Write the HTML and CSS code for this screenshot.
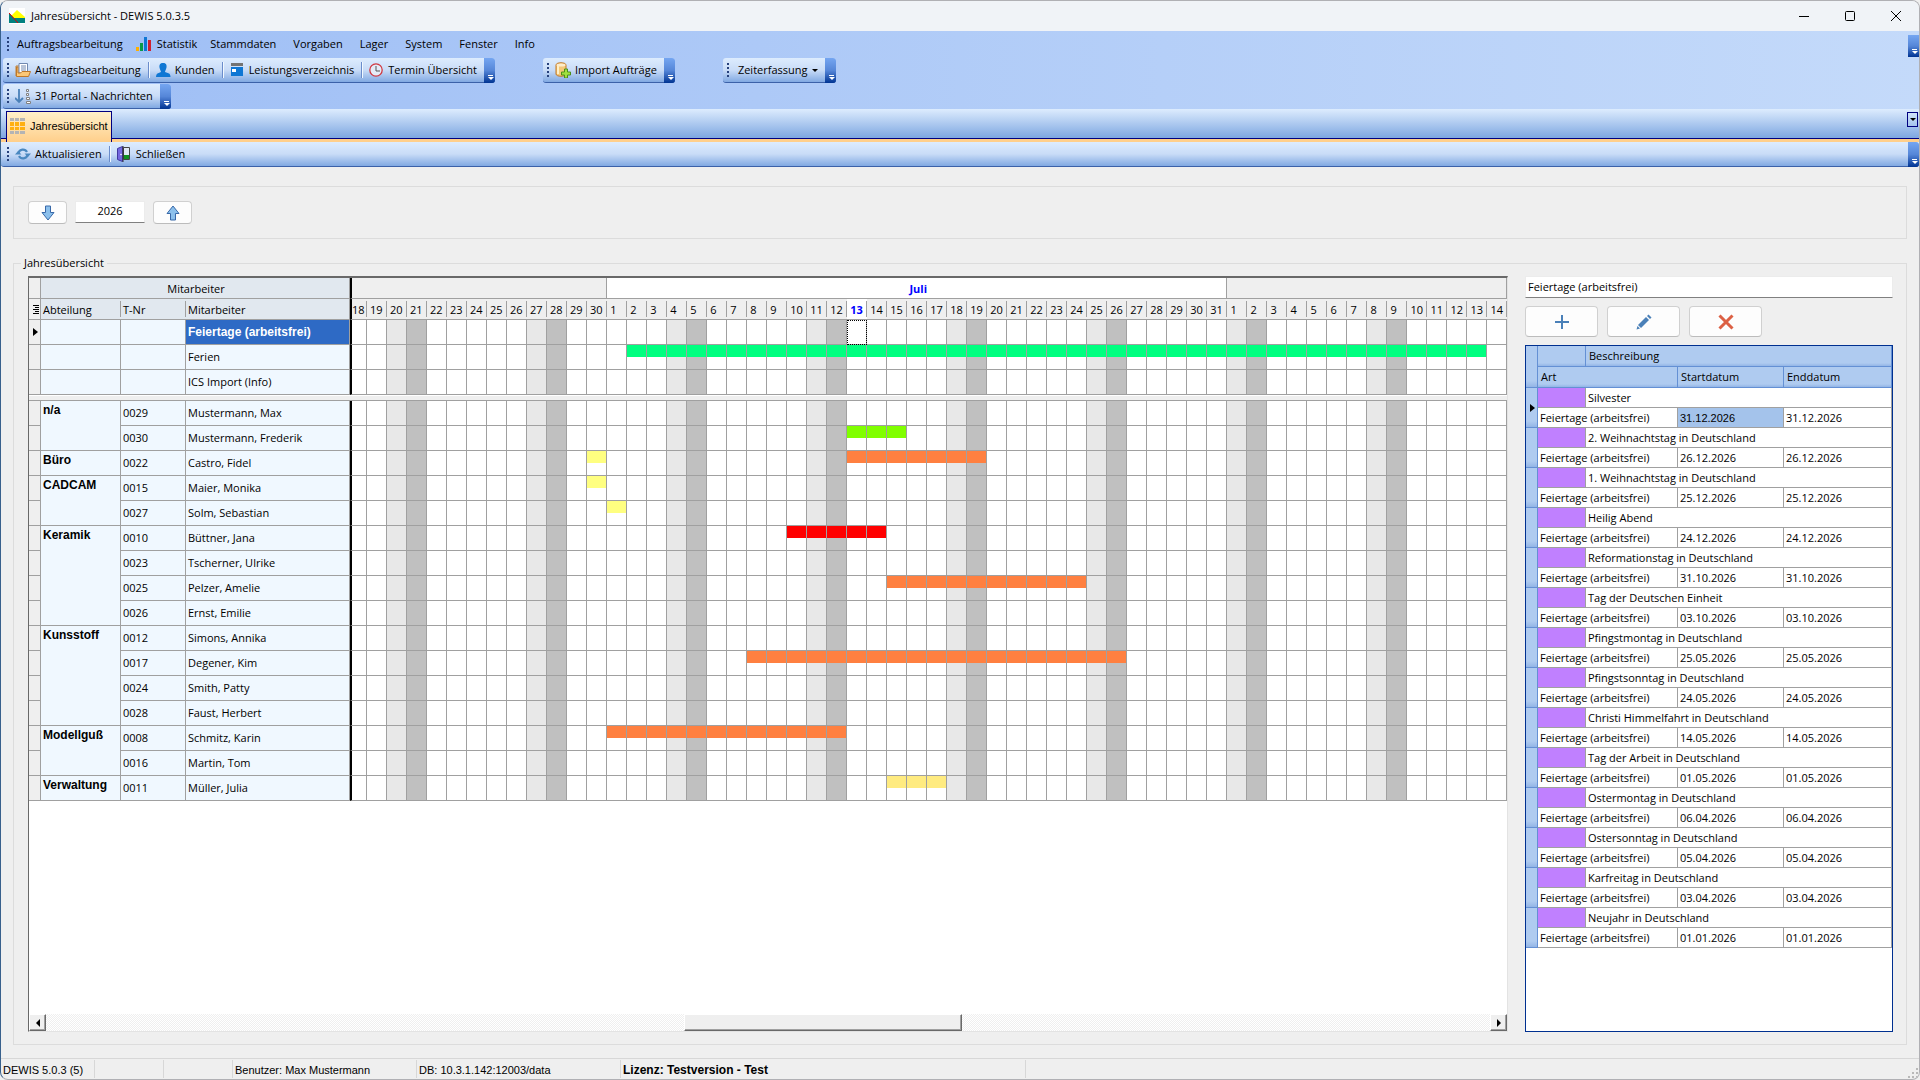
FILE: index.html
```html
<!DOCTYPE html>
<html lang="de">
<head>
  <meta charset="UTF-8">
  <title>Jahresübersicht - DEWIS 5.0.3.5</title>
  <link rel="stylesheet" href="styles.css">
</head>
<body>
  <div class="window">
    <header class="titlebar">
      <svg class="app-icon" width="16" height="16" viewBox="0 0 16 16">
        <rect width="16" height="16" fill="#fff"/>
        <path d="M0 10h16v5H0z" fill="#008080"/>
        <path d="M1 9l7-7 8 7v1H1z" fill="#ffff00"/>
        <path d="M0 5v5h5z" fill="#008080"/>
        <path d="M0 5l9 10" stroke="#e00000" stroke-width="1"/>
      </svg>
      <span class="title">Jahresübersicht - DEWIS 5.0.3.5</span>
      <button class="win-btn" aria-label="Minimieren"><svg width="10" height="10" viewBox="0 0 10 10"><path d="M0 5.5h10" stroke="#000"/></svg></button>
      <button class="win-btn" aria-label="Maximieren"><svg width="10" height="10" viewBox="0 0 10 10"><rect x=".5" y=".5" width="9" height="9" rx="1" fill="none" stroke="#000"/></svg></button>
      <button class="win-btn" aria-label="Fenster schließen"><svg width="10" height="10" viewBox="0 0 10 10"><path d="M0 0l10 10M10 0L0 10" stroke="#000"/></svg></button>
    </header>

    <div class="toolbars">
      <nav class="menu">
        <span class="grip"></span>
        <button>Auftragsbearbeitung</button>
        <button class="with-icon">
          <svg width="16" height="16" viewBox="0 0 16 16"><path d="M0 11h3v4H0z" fill="#ffb000"/><path d="M4 7h3v8H4z" fill="#0a9a48"/><path d="M8 1h3v14H8z" fill="#0f77d4"/><path d="M12 4h3v11h-3z" fill="#d02030"/></svg>
          Statistik
        </button>
        <button>Stammdaten</button>
        <button>Vorgaben</button>
        <button>Lager</button>
        <button>System</button>
        <button>Fenster</button>
        <button>Info</button>
        <button class="more" aria-label="Optionen"></button>
      </nav>

      <div class="tool-row">
        <div class="pill">
          <span class="grip"></span>
          <button class="tool">
            <svg width="16" height="16" viewBox="0 0 16 16"><path d="M1 14V4h3" fill="none" stroke="#c08030"/><path d="M4 1.500h8.500V11H4z" fill="#fff" stroke="#7088b0"/><path d="M6 4h5M6 6h5M6 8h5" stroke="#7088b0"/><path d="M1.500 5v9.500h12L15.500 9.500H7L5.500 11H3V5z" fill="#fbc878" stroke="#c07828"/></svg>
            Auftragsbearbeitung
          </button>
          <span class="sep"></span>
          <button class="tool">
            <svg width="16" height="16" viewBox="0 0 16 16"><path d="M8 1c3 0 4 2 3.500 4.500S10 9 10 10l4 1.500c1 .5 1.500 2 1.500 3.500H1c0-1.500.5-3 1.500-3.500L6 10c0-1-1.100-2-1.500-4.500S5 1 8 1z" fill="#0f77d4"/></svg>
            Kunden
          </button>
          <span class="sep"></span>
          <button class="tool">
            <svg width="16" height="16" viewBox="0 0 16 16"><path d="M2 1h12v3H2z" fill="#737373"/><path d="M2 5h12v9H2z" fill="#0f77d4"/><path d="M3 7h4v3H3z" fill="#fff"/></svg>
            Leistungsverzeichnis
          </button>
          <span class="sep"></span>
          <button class="tool">
            <svg width="16" height="16" viewBox="0 0 16 16"><circle cx="8" cy="8" r="6.200" fill="#e4ecf8" stroke="#d03840" stroke-width="1.300"/><path d="M8 4v5h4" fill="none" stroke="#555"/></svg>
            Termin Übersicht
          </button>
          <button class="more" aria-label="Optionen"></button>
        </div>

        <div class="pill">
          <span class="grip"></span>
          <button class="tool">
            <svg width="16" height="16" viewBox="0 0 16 16"><path d="M1 3c0-3 10-3 10 0v9c0 3-10 3-10 0z" fill="#f4c878" stroke="#c07828"/><path d="M3 4v8" stroke="#fff0c8" stroke-width="2"/><ellipse cx="6" cy="3" rx="4.500" ry="1.500" fill="#fdeccb"/><path d="M9.500 7h3v3h3v3h-3v3h-3v-3h-3v-3h3z" fill="#a0e040" stroke="#4c9018"/></svg>
            Import Aufträge
          </button>
          <button class="more" aria-label="Optionen"></button>
        </div>

        <div class="pill">
          <span class="grip"></span>
          <button class="tool text-only">Zeiterfassung <span class="caret"></span></button>
          <button class="more" aria-label="Optionen"></button>
        </div>
      </div>

      <div class="tool-row">
        <div class="pill">
          <span class="grip"></span>
          <button class="tool">
            <svg width="16" height="16" viewBox="0 0 16 16"><path d="M4 1v12M0 10l4 4 4-4" fill="none" stroke="#4a80b8" stroke-width="1.800"/><path d="M11.500 1.500h2v2h-2zM11.500 5.500h2v2h-2zM11.500 9.500h3v2h-3zM11.500 13.500h4v2h-4z" fill="#fff" stroke="#808080"/></svg>
            31 Portal - Nachrichten
          </button>
          <button class="more" aria-label="Optionen"></button>
        </div>
      </div>
    </div>

    <div class="tabs">
      <button class="tab">
        <svg width="15" height="16" viewBox="0 0 15 16"><path d="M0 0h4v3H0zM5 0h4v3H5zM10 0h5v3h-5zM0 13h4v3H0zM5 13h4v3H5zM10 13h5v3h-5z" fill="#b4b4b4"/><path d="M0 4h4v4H0zM5 4h4v4H5zM10 4h5v4h-5zM0 9h4v3H0zM5 9h4v3H5zM10 9h5v3h-5z" fill="#ffb010"/></svg>
        Jahresübersicht
      </button>
      <button class="tab-list" aria-label="Fensterliste"><span class="caret"></span></button>
    </div>

    <div class="pill page-tools">
      <span class="grip"></span>
      <button class="tool">
        <svg width="16" height="16" viewBox="0 0 16 16"><path d="M3.500 7A4.600 4.600 0 0 1 12 6M12.500 9A4.600 4.600 0 0 1 4 10" fill="none" stroke="#4a88c0" stroke-width="2.200"/><path d="M9.500 7.500h6.500L13 11zM0 8.500h6.500L3 5z" fill="#4a88c0"/></svg>
        Aktualisieren
      </button>
      <span class="sep"></span>
      <button class="tool">
        <svg width="16" height="16" viewBox="0 0 16 16"><path d="M7.500 1.500h6v12h-6z" fill="#dfe8f4" stroke="#444"/><path d="M8 9h5v4H8z" fill="#109020"/><path d="M1.500 2.500l5-2v15l-5-2z" fill="#7468e0" stroke="#4038a0"/><path d="M7 0v16" stroke="#333"/><circle cx="5" cy="8.500" r=".8" fill="#fff"/></svg>
        Schließen
      </button>
      <button class="more" aria-label="Optionen"></button>
    </div>

    <main>
      <div class="box year-box">
        <button class="btn btn-small" aria-label="Vorheriges Jahr"><svg width="14" height="16" viewBox="0 0 14 16"><path d="M4.500 1h5v6.500h3.500L7 15 1 7.500h3.500z" fill="#8cc0ec" stroke="#3868a8"/></svg></button>
        <input class="field year" type="text" value="2026" aria-label="Jahr">
        <button class="btn btn-small" aria-label="Nächstes Jahr"><svg width="14" height="16" viewBox="0 0 14 16"><path d="M4.500 15h5V8.500H13L7 1 1 8.500h3.500z" fill="#8cc0ec" stroke="#3868a8"/></svg></button>
      </div>

      <section class="box overview">
        <h2>Jahresübersicht</h2>
        <div class="panels">
          <div class="calendar">
            <div class="calendar-view">
              <table class="plan" id="plan"></table>
            </div>
            <div class="scrollbar">
              <button class="scroll-btn" aria-label="Nach links"><svg width="4" height="8" viewBox="0 0 4 8"><path d="M4 0v8L0 4z"/></svg></button>
              <div class="track"><div class="thumb"></div></div>
              <button class="scroll-btn" aria-label="Nach rechts"><svg width="4" height="8" viewBox="0 0 4 8"><path d="M0 0v8l4-4z"/></svg></button>
            </div>
          </div>

          <aside class="side">
            <input class="field" type="text" value="Feiertage (arbeitsfrei)" aria-label="Mitarbeiter">
            <div class="actions">
              <button class="btn" aria-label="Neu"><svg width="16" height="16" viewBox="0 0 16 16"><path d="M8 1v14M1 8h14" stroke="#4a80b8" stroke-width="2"/></svg></button>
              <button class="btn" aria-label="Bearbeiten"><svg width="16" height="16" viewBox="0 0 16 16"><path d="M2 11l8-8 3 3-8 8z" fill="#4a80b8"/><path d="M11 2l1.500-1.500 3 3L14 5z" fill="#4a80b8"/><path d="M1.500 12L4 14.500.500 15.500z" fill="#4a80b8"/></svg></button>
              <button class="btn" aria-label="Löschen"><svg width="16" height="16" viewBox="0 0 16 16"><path d="M1.500 1.500l13 13M14.500 1.500l-13 13" stroke="#dc6044" stroke-width="3"/></svg></button>
            </div>
            <div class="holidays">
              <table id="holidays">
                <colgroup><col class="c-ind"><col class="c-swatch"><col class="c-art"><col class="c-date"><col></colgroup>
                <thead>
                  <tr><th class="ind" rowspan="2"></th><th></th><th colspan="3">Beschreibung</th></tr>
                  <tr><th colspan="2">Art</th><th>Startdatum</th><th>Enddatum</th></tr>
                </thead>
              </table>
            </div>
          </aside>
        </div>
      </section>
    </main>

    <footer class="status">
      <span class="s-version">DEWIS 5.0.3 (5)</span>
      <span class="s-empty"></span>
      <span class="s-empty"></span>
      <span class="s-user">Benutzer: Max Mustermann</span>
      <span class="s-db">DB: 10.3.1.142:12003/data</span>
      <span class="s-license">Lizenz: Testversion - Test</span>
      <svg class="size-grip" width="11" height="11" viewBox="0 0 11 11"><path d="M8 0h2v2H8zM8 4h2v2H8zM4 4h2v2H4zM8 8h2v2H8zM4 8h2v2H4zM0 8h2v2H0z" fill="#b8b8b8"/></svg>
    </footer>
  </div>

  <script src="script.js"></script>
</body>
</html>
```

FILE: styles.css
```css
* {
  box-sizing: border-box;
}

body {
  margin: 0;
  background: #efefef;
  color: #000;
  font: 11px/16px "Open Sans", "Noto Sans", sans-serif;
}

button,
input {
  font: inherit;
  color: inherit;
}

button {
  background: none;
  border: 0;
  padding: 0;
  white-space: nowrap;
}

svg {
  display: block;
  flex: none;
}

.window {
  display: flex;
  flex-direction: column;
  min-height: 100vh;
  border: 1px solid #b0b0b4;
  border-left-color: #38608c;
  border-radius: 8px;
  overflow: hidden;
}

/* Title bar */
.titlebar {
  display: flex;
  align-items: center;
  height: 30px;
  padding-left: 8px;
  background: #f0f3f7;
}

.title {
  flex: 1;
  margin-left: 6px;
}

.win-btn {
  display: flex;
  align-items: center;
  justify-content: center;
  width: 46px;
  height: 28px;
}

/* Menu and toolbars */
.toolbars {
  height: 78px;
  background: linear-gradient(90deg, #9ebef5, #c4dafa);
}

.grip {
  flex: none;
  width: 2px;
  height: 14px;
  margin: 0 4px;
  background: repeating-linear-gradient(#27417c 0 2px, transparent 2px 4px);
}

.menu {
  display: flex;
  align-items: center;
  gap: 17px;
  height: 27px;
  padding: 0 0 2px 2px;
}

.menu .grip {
  margin-right: -9px;
}

.menu .with-icon {
  display: flex;
  align-items: center;
  gap: 5px;
  margin: 0 -4px;
}

.tool-row {
  display: flex;
  gap: 48px;
  height: 26px;
  padding: 0 2px;
}

.pill {
  display: flex;
  align-items: center;
  height: 25px;
  background: linear-gradient(#ddecfe, #c9dcf7 50%, #81a9e2);
  border-bottom: 1px solid #3b61a8;
  border-radius: 3px;
}

.tool {
  display: flex;
  align-items: center;
  gap: 4px;
  padding: 0 5px 0 2px;
}

.text-only {
  padding: 0 5px;
}

.sep {
  width: 2px;
  height: 16px;
  margin: 0 3px 0 2px;
  background: linear-gradient(90deg, #6a8ccb 50%, #f1f9ff 50%);
}

.more {
  position: relative;
  align-self: stretch;
  width: 11px;
  margin-left: 2px;
  margin-bottom: -1px;
  background: linear-gradient(#75a6f1, #5586d8 50%, #003493);
  border-radius: 0 3px 3px 0;
}

.more::before,
.more::after {
  content: "";
  position: absolute;
  left: 4px;
  bottom: 7px;
  width: 5px;
  height: 1px;
  background: #fff;
}

.more::after {
  bottom: 3px;
  width: 0;
  height: 0;
  background: none;
  border: 3px solid transparent;
  border-top-color: #fff;
  border-bottom: 0;
}

.menu .more,
.page-tools .more {
  margin-left: auto;
}

.menu .more {
  height: 22px;
  align-self: flex-end;
  border-radius: 0;
}

.caret {
  border: 3px solid transparent;
  border-top-color: #000;
  border-bottom: 0;
}

.tabs {
  display: flex;
  align-items: flex-end;
  justify-content: space-between;
  height: 33px;
  padding: 0 1px 0 5px;
  background: linear-gradient(#ddecfe, #81a9e2 28px, #81a9e2 29px, #000080 29px, #000080 30px, #ffcf8b 30px);
}

.tab {
  display: flex;
  align-items: center;
  gap: 5px;
  height: 31px;
  padding: 0 3px 3px;
  background: linear-gradient(#fff0c9, #ffcf8b);
  border: 1px solid #000080;
  border-bottom: 0;
  font-family: "Liberation Sans", sans-serif;
}

.tab-list {
  display: flex;
  align-items: center;
  justify-content: center;
  align-self: flex-start;
  width: 11px;
  height: 15px;
  margin-top: 3px;
  border: 1px solid #000080;
}

.page-tools {
  padding-left: 2px;
}

/* Content */
main {
  display: flex;
  flex: 1;
  flex-direction: column;
  padding: 19px 12px 13px;
}

.box {
  border: 1px solid #dcdcdc;
}

.year-box {
  display: flex;
  align-items: center;
  height: 53px;
  padding-left: 14px;
}

.btn {
  display: flex;
  align-items: center;
  justify-content: center;
  width: 73px;
  height: 31px;
  background: #fdfdfd;
  border: 1px solid #d0d0d0;
  border-bottom-color: #bcbcbc;
  border-radius: 4px;
}

.btn-small {
  width: 39px;
  height: 23px;
}

.field {
  width: 100%;
  height: 22px;
  padding: 0 2px 2px;
  background: #fff;
  border: 1px solid #ececec;
  border-bottom: 1px solid #808080;
}

.year {
  width: 70px;
  margin: 0 8px 2px;
  text-align: center;
}

.overview {
  display: flex;
  flex: 1;
  flex-direction: column;
  min-width: 0;
  margin-top: 24px;
  padding: 0 13px 12px 14px;
}

.overview h2 {
  align-self: flex-start;
  margin: -9px 0 0 -7px;
  padding: 0 3px;
  background: #efefef;
  font: inherit;
}

.panels {
  display: flex;
  flex: 1;
  gap: 17px;
  margin-top: 5px;
}

.calendar {
  display: flex;
  flex: 1;
  flex-direction: column;
  min-width: 0;
  border: 1px solid #e3e3e3;
  border-top: 2px solid #696969;
  border-left-color: #696969;
  background: #fff;
}

.calendar-view {
  flex: 1;
  overflow: hidden;
}

table {
  border-collapse: separate;
  border-spacing: 0;
  table-layout: fixed;
}

th,
td {
  padding: 0;
  font-weight: normal;
  text-align: left;
  white-space: nowrap;
  overflow: hidden;
}

/* Year plan */
.plan {
  width: 1478px;
}

.plan .c-ind { width: 12px; }
.plan .c-dept { width: 80px; }
.plan .c-nr { width: 65px; }
.plan .c-name { width: 164px; }
.plan .c-first { width: 17px; }
.plan .c-day { width: 20px; }

.plan th,
.plan td {
  border-right: 1px solid #a0a0a0;
  border-bottom: 1px solid #a0a0a0;
}

.plan tr {
  height: 25px;
}

.plan thead tr {
  height: 21px;
}

.plan thead th {
  padding: 2px 0 0 3px;
  background: #efefef;
}

.plan thead .staff {
  background: #e1e8ef;
}

.plan thead .center {
  text-align: center;
}

.plan thead .month {
  background: #fff;
  color: #0000ff;
  font-weight: bold;
  text-align: center;
}

/* Day and name headers: divider stops short of the row edges */
.plan thead .short {
  border-right: 0;
  background-image: linear-gradient(#a0a0a0, #a0a0a0);
  background-position: right 2px;
  background-repeat: no-repeat;
  background-size: 1px 16px;
}

.plan thead .today {
  background-color: #fff;
  color: #0000ff;
  font-weight: bold;
}

.plan .ind {
  background: #efefef;
}

.plan .ind svg {
  margin-left: 4px;
}

.plan .staff {
  padding-left: 2px;
  background: #f0f8ff;
}

.plan thead .staff.short {
  background-color: #e1e8ef;
  background-image: linear-gradient(#a0a0a0, #a0a0a0);
  background-position: right 2px;
  background-repeat: no-repeat;
  background-size: 1px 16px;
}

.plan .dept {
  padding: 1px 0 0 2px;
  font: bold 12px/16px "Liberation Sans", sans-serif;
  vertical-align: top;
}

.plan .active {
  background: #2e6ac5;
  color: #fff;
  font: bold 12px/16px "Liberation Sans", sans-serif;
}

.plan .first {
  border-left: 2px solid #000;
}

.plan thead .day.first {
  padding-left: 0;
}

.plan thead .ind {
  padding-left: 0;
}

.plan thead .ind svg {
  margin-left: 2px;
}

.plan .sat { background-color: #e8e8e8; }
.plan .sun { background-color: #c0c0c0; }

.plan .bar {
  background-image: linear-gradient(var(--bar), var(--bar));
  background-repeat: no-repeat;
  background-size: 100% 12px;
}

.plan .green { --bar: #00ff80; }
.plan .lime { --bar: #80ff00; }
.plan .orange { --bar: #ff8040; }
.plan .yellow { --bar: #ffff80; }
.plan .sand { --bar: #ffeb80; }
.plan .red { --bar: #ff0000; }

.plan .focus {
  outline: 1px dotted #000;
  outline-offset: -1px;
}

.plan .splitter {
  height: 6px;
}

.plan .splitter td {
  background: #efefef;
  border-top: 1px solid #fff;
  border-right: 0;
}

/* Scrollbar */
.scrollbar {
  display: flex;
  height: 17px;
  background: repeating-conic-gradient(#fff 0 25%, #efefef 0 50%) 0 0 / 2px 2px;
}

.scroll-btn,
.thumb {
  display: flex;
  align-items: center;
  justify-content: center;
  width: 17px;
  height: 17px;
  background: #efefef;
  border: 1px solid #fff;
  border-right-color: #696969;
  border-bottom-color: #696969;
  box-shadow: inset -1px -1px #a0a0a0;
}

.track {
  flex: 1;
}

.thumb {
  width: 278px;
  margin-left: 44.2%;
}

/* Holiday list */
.side {
  display: flex;
  flex-direction: column;
  width: 368px;
}

.actions {
  display: flex;
  gap: 9px;
  margin: 8px 0;
}

.holidays {
  flex: 1;
  background: #fff;
  border: 1px solid #003090;
}

.holidays table {
  width: 100%;
}

.holidays .c-ind { width: 12px; }
.holidays .c-swatch { width: 48px; }
.holidays .c-art { width: 92px; }
.holidays .c-date { width: 106px; }

.holidays th {
  height: 21px;
  padding-left: 3px;
  background: linear-gradient(#afcbf0 85%, #93b5e6);
  border-right: 1px solid #6490d4;
  border-bottom: 1px solid #6490d4;
}

.holidays td {
  height: 20px;
  padding-left: 2px;
  border-right: 1px solid #a0a0a0;
  border-bottom: 1px solid #a0a0a0;
}

.holidays .ind {
  padding: 0 0 0 4px;
  background: linear-gradient(#afcbf0 85%, #93b5e6);
  border-color: #6490d4;
}

.holidays .swatch {
  background: #c080ff;
}

.holidays .selected {
  background: #a4c3eb;
  font-family: "Liberation Sans", sans-serif;
}

/* Status bar */
.status {
  display: flex;
  align-items: center;
  height: 21px;
  border-top: 1px solid #d7d7d7;
  font: 11px/20px "Liberation Sans", sans-serif;
}

.status span {
  height: 18px;
  padding-left: 2px;
  border-right: 1px solid #d7d7d7;
  white-space: nowrap;
}

.s-version { width: 94px; }
.s-empty { width: 69px; }
.s-user { width: 184px; }
.s-db { width: 204px; }

.s-license {
  width: 405px;
  font-size: 12px;
  font-weight: bold;
}

.size-grip {
  align-self: flex-end;
  margin-left: auto;
}
```

FILE: script.js
```js
// Visible range: 18.06.2026 - 14.08.2026
const START = new Date(2026, 5, 18);
const DAYS = 58;
const JULY = 13;

// Bars are [first day, last day, color], counted from 18.06. (0)
const holidays = [
  { name: 'Feiertage (arbeitsfrei)', active: true },
  { name: 'Ferien', bars: [[14, 56, 'green']] },
  { name: 'ICS Import (Info)' }
];

const departments = [
  ['n/a', [
    { nr: '0029', name: 'Mustermann, Max' },
    { nr: '0030', name: 'Mustermann, Frederik', bars: [[25, 27, 'lime']] }
  ]],
  ['Büro', [
    { nr: '0022', name: 'Castro, Fidel', bars: [[12, 12, 'yellow'], [25, 31, 'orange']] }
  ]],
  ['CADCAM', [
    { nr: '0015', name: 'Maier, Monika', bars: [[12, 12, 'yellow']] },
    { nr: '0027', name: 'Solm, Sebastian', bars: [[13, 13, 'yellow']] }
  ]],
  ['Keramik', [
    { nr: '0010', name: 'Büttner, Jana', bars: [[22, 26, 'red']] },
    { nr: '0023', name: 'Tscherner, Ulrike' },
    { nr: '0025', name: 'Pelzer, Amelie', bars: [[27, 36, 'orange']] },
    { nr: '0026', name: 'Ernst, Emilie' }
  ]],
  ['Kunsstoff', [
    { nr: '0012', name: 'Simons, Annika' },
    { nr: '0017', name: 'Degener, Kim', bars: [[20, 38, 'orange']] },
    { nr: '0024', name: 'Smith, Patty' },
    { nr: '0028', name: 'Faust, Herbert' }
  ]],
  ['Modellguß', [
    { nr: '0008', name: 'Schmitz, Karin', bars: [[13, 24, 'orange']] },
    { nr: '0016', name: 'Martin, Tom' }
  ]],
  ['Verwaltung', [
    { nr: '0011', name: 'Müller, Julia', bars: [[27, 29, 'sand']] }
  ]]
];

const days = [];
for (let i = 0; i < DAYS; i++) {
  days.push(new Date(START.getFullYear(), START.getMonth(), START.getDate() + i));
}
const today = JULY + 12;
const marker = '<svg width="5" height="8" viewBox="0 0 5 8"><path d="M0 0v8l5-4z"/></svg>';

function dayCells(row) {
  return days.map((day, i) => {
    const classes = [];
    if (i === 0) classes.push('first');
    if (day.getDay() === 6) classes.push('sat');
    if (day.getDay() === 0) classes.push('sun');
    if (row.active && i === today) classes.push('focus');
    (row.bars || []).forEach(([from, to, color]) => {
      if (i >= from && i <= to) classes.push('bar', color);
    });
    return `<td class="${classes.join(' ')}"></td>`;
  }).join('');
}

function renderPlan() {
  let html = '<colgroup><col class="c-ind"><col class="c-dept"><col class="c-nr"><col class="c-name"><col class="c-first">';
  html += '<col class="c-day">'.repeat(DAYS - 1) + '</colgroup>';

  html += '<thead><tr><th class="ind"></th><th class="staff center" colspan="3">Mitarbeiter</th>';
  html += '<th class="first" colspan="13"></th><th class="month" colspan="31">Juli</th><th colspan="14"></th></tr>';
  html += '<tr><th class="ind"><svg width="8" height="10" viewBox="0 0 8 10"><path d="M2 .5h6M4 2.500h4M2 4.500h6M4 6.500h4M2 8.500h6" stroke="#000"/></svg></th>';
  html += '<th class="staff short">Abteilung</th><th class="staff short">T-Nr</th><th class="staff">Mitarbeiter</th>';
  days.forEach((day, i) => {
    html += `<th class="day short${i === 0 ? ' first' : ''}${i === today ? ' today' : ''}">${day.getDate()}</th>`;
  });
  html += '</tr></thead><tbody>';

  holidays.forEach(row => {
    html += `<tr><td class="ind">${row.active ? marker : ''}</td><td class="staff"></td><td class="staff"></td>`;
    html += `<td class="staff${row.active ? ' active' : ''}">${row.name}</td>${dayCells(row)}</tr>`;
  });
  html += `<tr class="splitter"><td colspan="${DAYS + 4}"></td></tr>`;

  departments.forEach(([dept, rows]) => {
    rows.forEach((row, i) => {
      html += '<tr><td class="ind"></td>';
      if (i === 0) html += `<td class="staff dept" rowspan="${rows.length}">${dept}</td>`;
      html += `<td class="staff">${row.nr}</td><td class="staff">${row.name}</td>${dayCells(row)}</tr>`;
    });
  });
  document.getElementById('plan').innerHTML = html + '</tbody>';
}

const dates = [
  ['Silvester', '31.12.2026'],
  ['2. Weihnachtstag in Deutschland', '26.12.2026'],
  ['1. Weihnachtstag in Deutschland', '25.12.2026'],
  ['Heilig Abend', '24.12.2026'],
  ['Reformationstag in Deutschland', '31.10.2026'],
  ['Tag der Deutschen Einheit', '03.10.2026'],
  ['Pfingstmontag in Deutschland', '25.05.2026'],
  ['Pfingstsonntag in Deutschland', '24.05.2026'],
  ['Christi Himmelfahrt in Deutschland', '14.05.2026'],
  ['Tag der Arbeit in Deutschland', '01.05.2026'],
  ['Ostermontag in Deutschland', '06.04.2026'],
  ['Ostersonntag in Deutschland', '05.04.2026'],
  ['Karfreitag in Deutschland', '03.04.2026'],
  ['Neujahr in Deutschland', '01.01.2026']
];

function renderHolidays() {
  const html = dates.map(([text, date], i) => `
    <tbody>
      <tr><td class="ind" rowspan="2">${i === 0 ? marker : ''}</td><td class="swatch"></td><td colspan="3">${text}</td></tr>
      <tr><td colspan="2">Feiertage (arbeitsfrei)</td><td${i === 0 ? ' class="selected"' : ''}>${date}</td><td>${date}</td></tr>
    </tbody>`).join('');
  document.getElementById('holidays').insertAdjacentHTML('beforeend', html);
}

renderPlan();
renderHolidays();
```
